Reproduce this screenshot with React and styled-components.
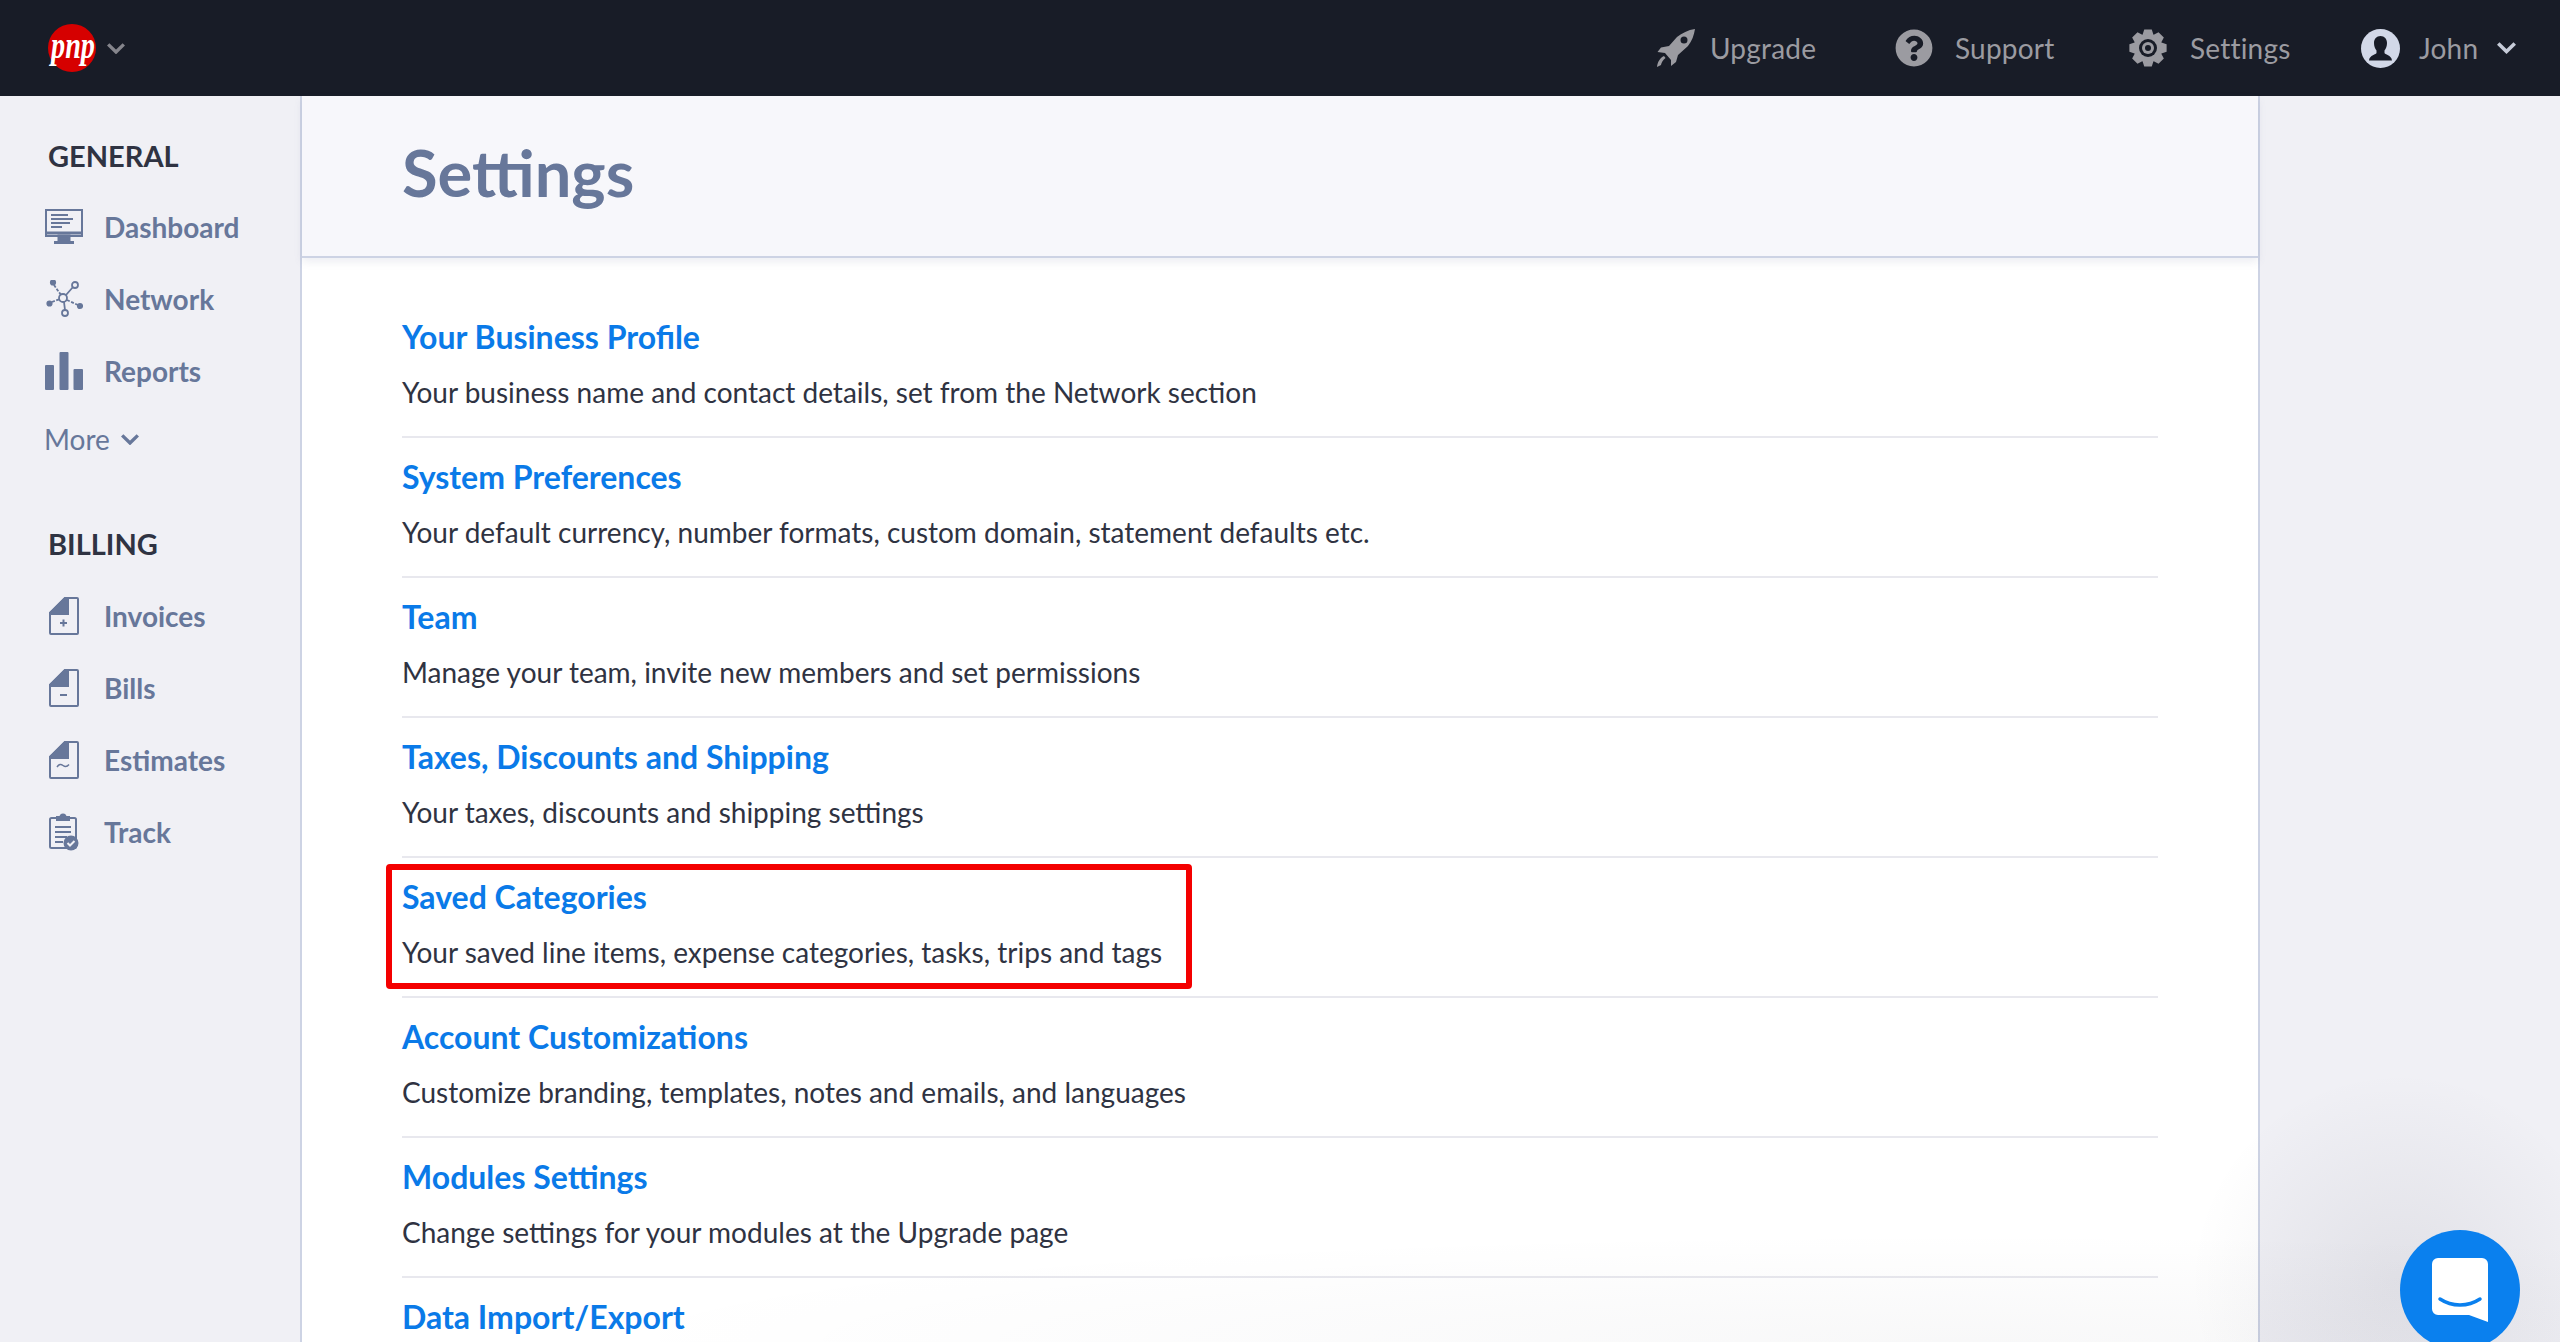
import React from 'react';
import styled, { createGlobalStyle } from 'styled-components';
import { FaQuestionCircle } from 'react-icons/fa';

const FONT = `Lato, "Open Sans", "Liberation Sans", sans-serif`;

const settingsRows = [
	{ title: 'Your Business Profile', text: 'Your business name and contact details, set from the Network section' },
	{ title: 'System Preferences', text: 'Your default currency, number formats, custom domain, statement defaults etc.' },
	{ title: 'Team', text: 'Manage your team, invite new members and set permissions' },
	{ title: 'Taxes, Discounts and Shipping', text: 'Your taxes, discounts and shipping settings' },
	{ title: 'Saved Categories', text: 'Your saved line items, expense categories, tasks, trips and tags', marked: true },
	{ title: 'Account Customizations', text: 'Customize branding, templates, notes and emails, and languages' },
	{ title: 'Modules Settings', text: 'Change settings for your modules at the Upgrade page' },
	{ title: 'Data Import/Export' },
];

const Chevron = ({ size = 18, color = 'currentColor' }) => (
	<svg width={size} height={(size * 11) / 18} viewBox='0 0 18 11' fill='none' stroke={color} strokeWidth='3.4'>
		<path d='M1.2 1.4 9 9 16.8 1.4' />
	</svg>
);

const DashboardIcon = () => (
	<svg width='38' height='36' viewBox='0 0 38 36' fill='none' stroke='#67779a'>
		<rect x='1' y='1' width='36' height='26' strokeWidth='2' />
		<path d='M6 6h17M6 10h22M6 14h19M6 18h11' strokeWidth='2' />
		<path d='M1 24h36' strokeWidth='3' />
		<path d='M14 27h10v5H14zM9 33.500h20' fill='#67779a' strokeWidth='3' />
	</svg>
);

const NetworkIcon = () => (
	<svg width='38' height='38' viewBox='-2 0 38 38' fill='none' stroke='#67779a' strokeWidth='1.800'>
		<circle cx='16' cy='18' r='4' />
		<circle cx='28' cy='5' r='3' />
		<circle cx='18' cy='33' r='3' />
		<circle cx='6' cy='2.500' r='2.200' fill='#67779a' />
		<circle cx='2.500' cy='23.500' r='2.200' fill='#67779a' />
		<circle cx='33' cy='26' r='2.200' fill='#67779a' />
		<path d='M19 15 26 7M17 22l1 8' />
		<path d='M7 5l7 10M5 22l8-3M20 20l11 5' strokeDasharray='3 1.500' />
	</svg>
);

const ReportsIcon = () => (
	<svg width='38' height='38' viewBox='0 0 38 38' fill='#67779a'>
		<rect x='0' y='13' width='9' height='25' rx='1' />
		<rect x='14.500' y='0' width='9' height='38' rx='1' />
		<rect x='28.500' y='17' width='9.500' height='21' rx='1' />
	</svg>
);

const DocIcon = ({ children }) => (
	<svg width='38' height='38' viewBox='-4 0 38 38' fill='none' stroke='#67779a' strokeWidth='2'>
		<path d='M16 1h12a1 1 0 0 1 1 1v34a1 1 0 0 1-1 1H2a1 1 0 0 1-1-1V16z' />
		<path d='M16 1 1 16v1h18V1z' fill='#67779a' />
		{children}
	</svg>
);

const TrackIcon = () => (
	<svg width='38' height='38' viewBox='-4 0 38 38' fill='none' stroke='#67779a' strokeWidth='2'>
		<rect x='1' y='5' width='26' height='30' rx='1.500' />
		<path d='M8 7V4h3.500a2.500 2.500 0 0 1 5 0H20v3z' fill='#67779a' />
		<path d='M6 14h16M6 19h16M6 24h12M6 29h8' />
		<circle cx='22' cy='30' r='7.500' fill='#67779a' stroke='none' />
		<path d='M18.500 30l2.500 2.500 4.500-4.500' stroke='#f0f0f5' />
	</svg>
);

const RocketIcon = () => (
	<svg width='38' height='38' viewBox='0 0 38 38' fill='#9b9ba1'>
		<path
			fillRule='evenodd'
			d='M38 0C31 1 25 4 20 8L12 17 4 18.500 .5 23 8 24l6 7v6l5-4 2-7 10-9C35 12 37 6 38 0zM27 7.500a3.500 3.500 0 1 1 0 7 3.500 3.500 0 0 1 0-7z'
		/>
		<path d='M0 38C.5 33 3 29 7 27l1.500 2C6 31 4.500 33 4 36z' />
	</svg>
);

const gearPoints = () => {
	const points = [];
	for (let i = 0; i < 8; i++) {
		const angle = (i * Math.PI) / 4 - Math.PI / 2;
		[[-0.38, 14.5], [-0.2, 19], [0.2, 19], [0.38, 14.5]].forEach(([offset, radius]) => {
			const x = 19 + radius * Math.cos(angle + offset);
			const y = 19 + radius * Math.sin(angle + offset);
			points.push(`${x.toFixed(2)},${y.toFixed(2)}`);
		});
	}
	return points.join(' ');
};

const GearIcon = () => (
	<svg width='38' height='38' viewBox='0 0 38 38'>
		<polygon points={gearPoints()} fill='#9b9ba1' />
		<circle cx='19' cy='19' r='9' fill='#181c27' />
		<circle cx='19' cy='19' r='6' fill='#9b9ba1' />
		<circle cx='19' cy='19' r='3' fill='#181c27' />
	</svg>
);

const AvatarIcon = () => (
	<svg width='39' height='39' viewBox='0 0 39 39'>
		<circle cx='19.500' cy='19.500' r='19.500' fill='#d2d8e8' />
		<path
			d='M19.500 7c-4 0-6.500 3-6.500 7 0 3 1 5.500 2.500 7.500v2.500c0 1.500-7 1.800-7.500 7.500h23c-.5-5.700-7.500-6-7.500-7.500v-2.500c1.500-2 2.500-4.500 2.500-7.500 0-4-2.500-7-6.500-7z'
			fill='#181c27'
		/>
	</svg>
);

const navGeneral = [
	{ label: 'Dashboard', icon: <DashboardIcon /> },
	{ label: 'Network', icon: <NetworkIcon /> },
	{ label: 'Reports', icon: <ReportsIcon /> },
];

const navBilling = [
	{ label: 'Invoices', icon: <DocIcon><path d='M14.500 22.500v7M11 26h7' /></DocIcon> },
	{ label: 'Bills', icon: <DocIcon><path d='M11 26h7' /></DocIcon> },
	{ label: 'Estimates', icon: <DocIcon><path d='M8 26c2-3 4-3 6-1.500s4 1.500 6-1' strokeWidth='1.500' /></DocIcon> },
	{ label: 'Track', icon: <TrackIcon /> },
];

const App = () => {
	return (
		<>
			<GlobalStyle />
			<Page>
				<TopBar>
					<LogoButton>
						<Logo>
							<svg width='48' height='48' viewBox='0 0 48 48'>
								<circle cx='24' cy='24' r='24' fill='#d60000' />
								<text x='25' y='34' textAnchor='middle' fill='#fff' fontFamily='"Liberation Serif", serif' fontStyle='italic' fontWeight='700' fontSize='38' textLength='44' lengthAdjust='spacingAndGlyphs'>pnp</text>
							</svg>
						</Logo>
						<Chevron size={18} color='#85858c' />
					</LogoButton>
					<TopNav>
						<TopLink $width={238} $gap={15}><RocketIcon />Upgrade</TopLink>
						<TopLink $width={234} $gap={22}><FaQuestionCircle size={38} />Support</TopLink>
						<TopLink $width={232} $gap={23}><GearIcon />Settings</TopLink>
						<TopLink $width={156} $gap={19}><AvatarIcon />John<Chevron size={19} color='#c6cbd8' /></TopLink>
					</TopNav>
				</TopBar>
				<Body>
					<Sidebar>
						<SideTitle>GENERAL</SideTitle>
						{navGeneral.map(item => (
							<NavItem key={item.label}>
								<NavIcon>{item.icon}</NavIcon>
								{item.label}
							</NavItem>
						))}
						<MoreLink>More <Chevron size={18} color='#67779a' /></MoreLink>
						<SideTitle $billing>BILLING</SideTitle>
						{navBilling.map(item => (
							<NavItem key={item.label}>
								<NavIcon>{item.icon}</NavIcon>
								{item.label}
							</NavItem>
						))}
					</Sidebar>
					<Panel>
						<PanelHeader>
							<PageTitle>Settings</PageTitle>
						</PanelHeader>
						<RowList>
							{settingsRows.map(row => (
								<Row key={row.title}>
									{row.marked && <Highlight />}
									<RowTitle>{row.title}</RowTitle>
									{row.text && <RowText>{row.text}</RowText>}
								</Row>
							))}
						</RowList>
					</Panel>
				</Body>
				<ChatGlow />
				<ChatButton>
					<svg width='56' height='64' viewBox='0 0 56 64'>
						<path d='M6 0h44a6 6 0 0 1 6 6v58l-19-7H6a6 6 0 0 1-6-6V6a6 6 0 0 1 6-6z' fill='#fff' />
						<path d='M8 41c12 8 28 8 40 0' fill='none' stroke='#0a80ee' strokeWidth='3.500' strokeLinecap='round' />
					</svg>
				</ChatButton>
			</Page>
		</>
	);
};

const GlobalStyle = createGlobalStyle`
	html, body {
		margin: 0;
		padding: 0;
		background-color: #f0f0f5;
		font-family: ${FONT};
	}
	* {
		box-sizing: border-box;
	}
`;

const Page = styled.div`
	position: relative;
	height: 100vh;
	overflow: hidden;
	display: flex;
	flex-direction: column;
`;

const TopBar = styled.div`
	height: 96px;
	flex-shrink: 0;
	background-color: #181c27;
	display: flex;
	align-items: center;
	justify-content: space-between;
	padding-left: 48px;
`;

const LogoButton = styled.div`
	display: flex;
	align-items: center;
	gap: 11px;
`;

const Logo = styled.div`
	width: 48px;
	height: 48px;
`;

const TopNav = styled.div`
	display: flex;
	align-items: center;
	padding-right: 43px;
`;

const TopLink = styled.div`
	width: ${props => props.$width}px;
	display: flex;
	align-items: center;
	gap: ${props => props.$gap}px;
	color: #9b9ba1;
	font-size: 28px;
	letter-spacing: 0.2px;
`;

const Body = styled.div`
	flex: 1;
	display: flex;
	min-height: 0;
`;

const Sidebar = styled.div`
	width: 300px;
	flex-shrink: 0;
	padding: 40px 0 0 44px;
`;

const SideTitle = styled.div`
	color: #2f3342;
	font-size: 29px;
	font-weight: 700;
	line-height: 40px;
	margin: ${props => (props.$billing ? '53px 0 16px 4px' : '0 0 15px 4px')};
`;

const NavItem = styled.div`
	height: 72px;
	display: flex;
	align-items: center;
	color: #67779a;
	font-size: 28px;
	font-weight: 700;
`;

const NavIcon = styled.div`
	width: 60px;
	display: flex;
	padding-left: 1px;
`;

const MoreLink = styled.div`
	height: 64px;
	display: flex;
	align-items: center;
	gap: 11px;
	color: #67779a;
	font-size: 28px;
`;

const Panel = styled.div`
	width: 1960px;
	flex-shrink: 0;
	background-color: #fff;
	border-left: 2px solid #cdd3e4;
	border-right: 2px solid #cdd3e4;
`;

const PanelHeader = styled.div`
	height: 162px;
	background-color: #f7f7fb;
	border-bottom: 2px solid #cdd3e4;
	box-shadow: 0 4px 8px rgba(103, 119, 154, 0.12);
	display: flex;
	align-items: center;
	padding: 0 0 8px 100px;
`;

const PageTitle = styled.h1`
	margin: 0;
	color: #67779a;
	font-size: 65px;
	font-weight: 700;
`;

const RowList = styled.div`
	padding: 40px 100px 0 100px;
`;

const Row = styled.div`
	position: relative;
	height: 140px;
	border-bottom: 2px solid #e8e8ee;
	&:last-child {
		border-bottom: none;
	}
`;

const RowTitle = styled.div`
	padding-top: 19px;
	color: #0a7ae8;
	font-size: 32px;
	font-weight: 700;
	line-height: 40px;
`;

const RowText = styled.div`
	margin-top: 16px;
	color: #2f3342;
	font-size: 28px;
	line-height: 38px;
`;

const Highlight = styled.div`
	position: absolute;
	left: -16px;
	top: 6px;
	width: 806px;
	height: 125px;
	border: 6px solid #f40000;
	border-radius: 4px;
`;

const ChatGlow = styled.div`
	position: absolute;
	right: 0;
	bottom: 0;
	width: 1900px;
	height: 320px;
	pointer-events: none;
	background:
		radial-gradient(circle 210px at 1740px 260px, rgba(30, 30, 50, 0.07), rgba(30, 30, 50, 0) 100%),
		radial-gradient(ellipse 1400px 110px at 1300px 100%, rgba(30, 30, 50, 0.03), rgba(30, 30, 50, 0) 100%);
`;

const ChatButton = styled.div`
	position: absolute;
	right: 40px;
	bottom: -8px;
	width: 120px;
	height: 120px;
	border-radius: 50%;
	background-color: #0a80ee;
	display: flex;
	align-items: center;
	justify-content: center;
`;

export default App;
